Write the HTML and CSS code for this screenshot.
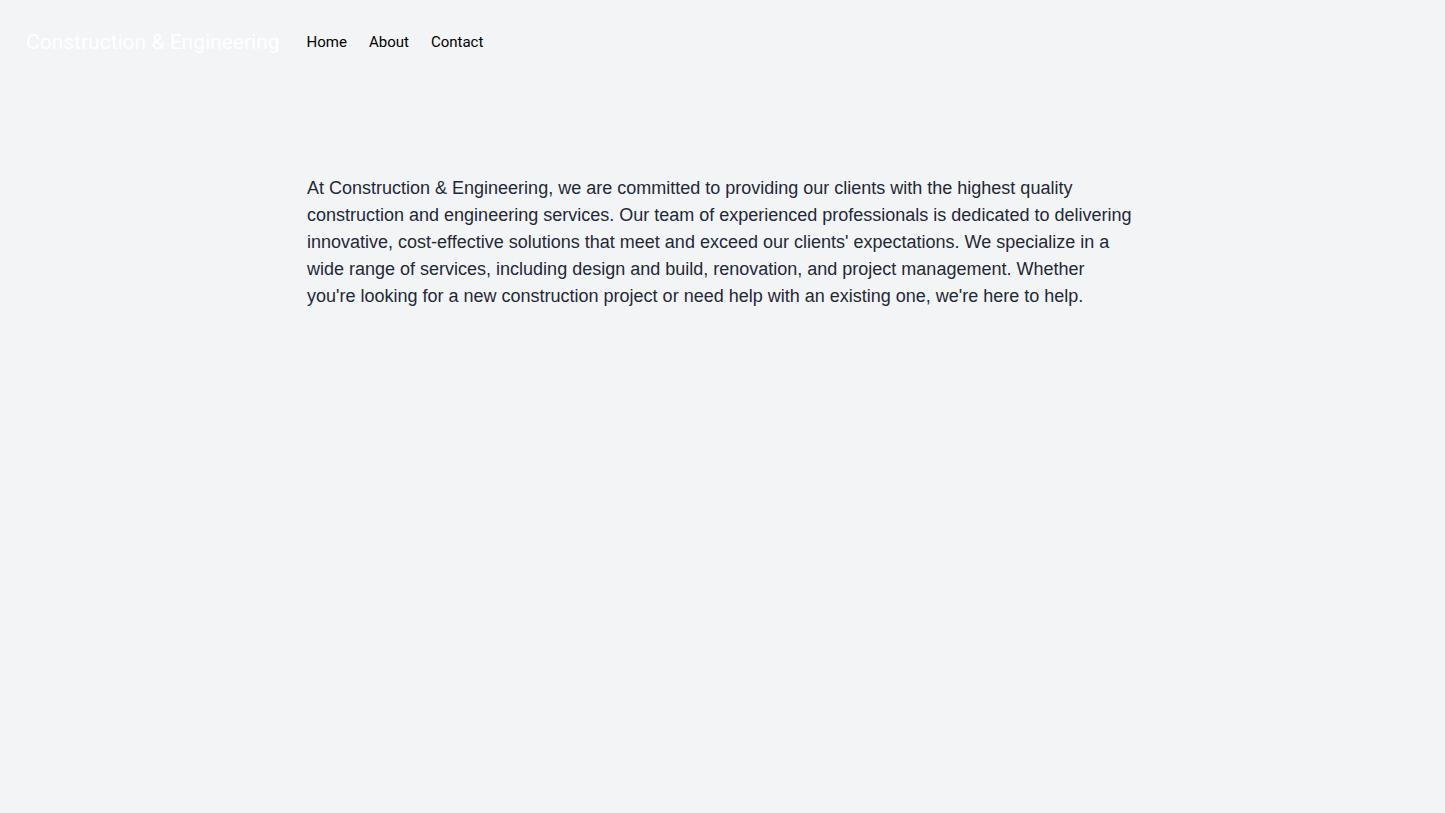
FILE: index.html
```html
<!DOCTYPE html>
<html lang="en">
<head>
<meta charset="utf-8">
<title>Construction &amp; Engineering</title>
<link rel="stylesheet" href="styles.css">
</head>
<body>
<header class="site-header">
  <div class="brand">Construction &amp; Engineering</div>
  <nav class="nav">
    <a href="#" class="nav-link">Home</a>
    <a href="#" class="nav-link">About</a>
    <a href="#" class="nav-link">Contact</a>
  </nav>
</header>
<main class="main">
  <p class="intro">At Construction &amp; Engineering, we are committed to providing our clients with the highest quality construction and engineering services. Our team of experienced professionals is dedicated to delivering innovative, cost-effective solutions that meet and exceed our clients' expectations. We specialize in a wide range of services, including design and build, renovation, and project management. Whether you're looking for a new construction project or need help with an existing one, we're here to help.</p>
</main>
</body>
</html>
```
FILE: styles.css
```css
html, body {
  margin: 0;
  padding: 0;
}
*, *::before, *::after {
  box-sizing: border-box;
}
body {
  background: #f3f4f6;
  min-height: 813px;
  font-family: "Liberation Sans", Arial, sans-serif;
}
.site-header {
  display: flex;
  align-items: center;
  padding: 28px 24px 20px 26px;
  font-family: Roboto, sans-serif;
}
.brand {
  color: #ffffff;
  font-size: 21px;
  line-height: 28px;
  margin-right: 27px;
}
.nav {
  display: flex;
  gap: 22px;
  padding-bottom: 1px;
}
.nav-link {
  color: #000000;
  text-decoration: none;
  font-size: 15px;
  line-height: 24px;
}
.main {
  max-width: 893px;
  margin: 0 auto;
  padding: 99px 33px 0 31px;
}
.intro {
  margin: 0;
  font-size: 18px;
  line-height: 27px;
  color: #1f2937;
}
```
